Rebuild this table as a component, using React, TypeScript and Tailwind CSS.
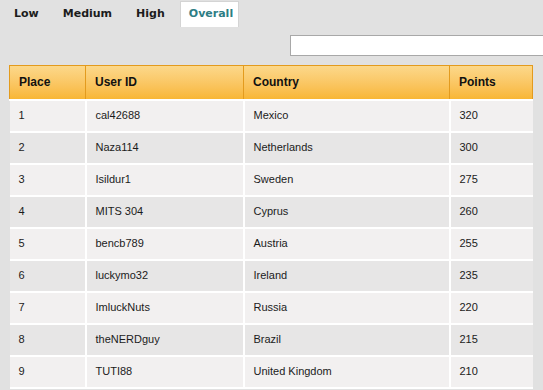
import React from 'react';

const rows = [
  { place: 1, user: 'cal42688', country: 'Mexico', points: 320 },
  { place: 2, user: 'Naza114', country: 'Netherlands', points: 300 },
  { place: 3, user: 'Isildur1', country: 'Sweden', points: 275 },
  { place: 4, user: 'MITS 304', country: 'Cyprus', points: 260 },
  { place: 5, user: 'bencb789', country: 'Austria', points: 255 },
  { place: 6, user: 'luckymo32', country: 'Ireland', points: 235 },
  { place: 7, user: 'ImluckNuts', country: 'Russia', points: 220 },
  { place: 8, user: 'theNERDguy', country: 'Brazil', points: 215 },
  { place: 9, user: 'TUTI88', country: 'United Kingdom', points: 210 },
];

const tabs = ['Low', 'Medium', 'High', 'Overall'];

const App: React.FC = () => {
  return (
    <div className="w-[543px] h-[390px] overflow-hidden bg-[#e1e1e1] font-['Liberation_Sans',Arial,sans-serif]">
      {/* Tabs */}
      <div className="flex h-[28px] pl-[2px] pt-[1px] font-['DejaVu_Sans',Verdana,sans-serif] text-[11px] font-bold">
        {tabs.map((tab) => (
          <div
            key={tab}
            className={
              tab === 'Overall'
                ? 'h-[26px] pl-[8px] pr-[5px] flex items-center bg-white border border-[#d4d4d4] border-b-0 text-[#2d7d84] ml-[3px]'
                : 'h-[26px] px-[12px] flex items-center text-[#1c1c1c]'
            }
          >
            {tab}
          </div>
        ))}
      </div>

      {/* Search */}
      <div className="flex justify-end h-[37px] pt-[7px]">
        <input
          type="text"
          className="w-[254px] h-[21px] bg-white border border-[#a8a8a8] -mr-[1px] outline-none"
        />
      </div>

      {/* Table */}
      <div className="ml-[9px] w-[524px]">
        <table className="w-full border-collapse">
          <thead>
            <tr className="h-[34px] bg-gradient-to-b from-[#fcd88a] to-[#f8b52f] text-[12px] font-bold text-[#111]">
              <th className="w-[76px] text-left pl-[9px] border border-[#e39b1e]">Place</th>
              <th className="w-[158px] text-left pl-[9px] border border-[#e39b1e]">User ID</th>
              <th className="w-[206px] text-left pl-[9px] border border-[#e39b1e]">Country</th>
              <th className="text-left pl-[9px] border border-[#e39b1e]">Points</th>
            </tr>
          </thead>
          <tbody className="text-[11px] text-[#1b1b1b]">
            {rows.map((r, i) => (
              <tr
                key={r.place}
                className={i % 2 === 0 ? 'h-[32px] bg-[#f2f0f0]' : 'h-[32px] bg-[#e7e6e6]'}
              >
                <td className="pl-[9px] border-2 border-white border-l-0">{r.place}</td>
                <td className="pl-[9px] border-2 border-white">{r.user}</td>
                <td className="pl-[9px] border-2 border-white">{r.country}</td>
                <td className="pl-[9px] border-2 border-white border-r-0">{r.points}</td>
              </tr>
            ))}
          </tbody>
        </table>
      </div>
    </div>
  );
};

export default App;
